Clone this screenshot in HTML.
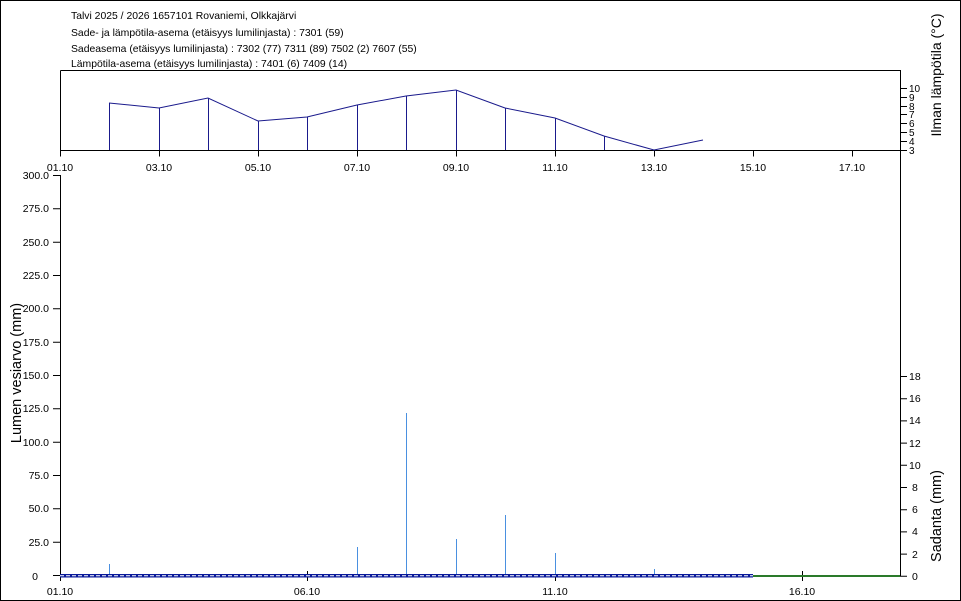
<!DOCTYPE html>
<html><head><meta charset="utf-8"><style>
html,body{margin:0;padding:0;background:#fff;}
svg{display:block;font-family:"Liberation Sans",sans-serif;}
</style></head><body>
<svg width="961" height="601" viewBox="0 0 961 601" xmlns="http://www.w3.org/2000/svg">
<rect x="0.5" y="0.5" width="960" height="600" fill="#fff" stroke="#000"/>
<g font-size="10.4" fill="#000">
<text x="71" y="19">Talvi 2025 / 2026 1657101 Rovaniemi, Olkkajärvi</text>
<text x="71" y="36">Sade- ja lämpötila-asema (etäisyys lumilinjasta) :  7301 (59)</text>
<text x="71" y="52">Sadeasema (etäisyys lumilinjasta) :  7302 (77) 7311 (89) 7502 (2) 7607 (55)</text>
<text x="71" y="67">Lämpötila-asema (etäisyys lumilinjasta) :  7401 (6) 7409 (14)</text>
</g>
<g stroke="#000" fill="none" stroke-width="1">
<path d="M60.5 70.5H900.5V576.5"/>
<path d="M60.5 70.5V150.5H900.5"/>
<path d="M60.5 150.5v6M159.5 150.5v6M258.5 150.5v6M357.5 150.5v6M456.5 150.5v6M555.5 150.5v6M654.5 150.5v6M753.5 150.5v6M852.5 150.5v6"/>
<path d="M900 88.5h7M900 97.5h7M900 106.5h7M900 114.5h7M900 123.5h7M900 132.5h7M900 141.5h7M900 150.5h7"/>
</g>
<g font-size="10.5" text-anchor="middle">
<text x="60" y="171">01.10</text><text x="159" y="171">03.10</text><text x="258" y="171">05.10</text><text x="357" y="171">07.10</text><text x="456" y="171">09.10</text><text x="555" y="171">11.10</text><text x="654" y="171">13.10</text><text x="753" y="171">15.10</text><text x="852" y="171">17.10</text>
</g>
<g font-size="10">
<text x="909" y="92">10</text><text x="909" y="101">9</text><text x="909" y="110">8</text><text x="909" y="118">7</text><text x="909" y="127">6</text><text x="909" y="136">5</text><text x="909" y="145">4</text><text x="909" y="154">3</text>
</g>
<text transform="translate(941,75) rotate(-90)" font-size="14" text-anchor="middle">Ilman lämpötila (°C)</text>
<g stroke="#1a1a8c" fill="none" stroke-width="1">
<polyline points="109,103 159,108 208,98 258,121 307,117 357,105 406,96 456,90 505,108 555,118 604,136 654,150 703,140"/>
<path d="M109.5 103V150M159.5 108V150M208.5 98V150M258.5 121V150M307.5 117V150M357.5 105V150M406.5 96V150M456.5 90V150M505.5 108V150M555.5 118V150M604.5 136V150"/>
</g>
<g stroke="#000" fill="none">
<path d="M60.5 175V581"/>
<path d="M53 175.5h7M53 208.8h7M53 242.2h7M53 275.5h7M53 308.8h7M53 342.2h7M53 375.5h7M53 408.8h7M53 442.2h7M53 475.5h7M53 508.8h7M53 542.2h7M53 575.5h7"/>
<path d="M900 376.5h7M900 398.7h7M900 420.9h7M900 443.1h7M900 465.3h7M900 487.5h7M900 509.7h7M900 531.9h7M900 554.1h7M900 576.3h7"/>
<path d="M307.5 571v10M555.5 571v10M802.5 571v10"/>
</g>
<g font-size="10.5" text-anchor="end">
<text x="49" y="179">300.0</text><text x="49" y="212">275.0</text><text x="49" y="246">250.0</text><text x="49" y="279">225.0</text><text x="49" y="312">200.0</text><text x="49" y="346">175.0</text><text x="49" y="379">150.0</text><text x="49" y="412">125.0</text><text x="49" y="446">100.0</text><text x="49" y="479">75.0</text><text x="49" y="512">50.0</text><text x="49" y="546">25.0</text><text x="38" y="580">0</text>
</g>
<g font-size="10.5">
<text x="909" y="380">18</text><text x="909" y="402">16</text><text x="909" y="424">14</text><text x="909" y="447">12</text><text x="909" y="469">10</text><text x="912" y="491">8</text><text x="912" y="513">6</text><text x="912" y="535">4</text><text x="912" y="558">2</text><text x="912" y="580">0</text>
</g>
<g font-size="10.5" text-anchor="middle">
<text x="60" y="595">01.10</text><text x="307" y="595">06.10</text><text x="555" y="595">11.10</text><text x="802" y="595">16.10</text>
</g>
<text transform="translate(21,373) rotate(-90)" font-size="14.5" text-anchor="middle">Lumen vesiarvo (mm)</text>
<text transform="translate(941,516) rotate(-90)" font-size="14.5" text-anchor="middle">Sadanta (mm)</text>
<g stroke="#4a90e0" stroke-width="1">
<path d="M109.5 564V576M357.5 547V576M406.5 413V576M456.5 539V576M505.5 515V576M555.5 553V576M654.5 569V576"/>
</g>
<rect x="60" y="574" width="693" height="3.5" fill="#0a1a9a"/>
<line x1="60" y1="575.8" x2="753" y2="575.8" stroke="#fff" stroke-width="1" stroke-dasharray="4,2"/>
<rect x="753" y="575" width="147" height="2" fill="#2a7a2a"/>
</svg>
</body></html>
